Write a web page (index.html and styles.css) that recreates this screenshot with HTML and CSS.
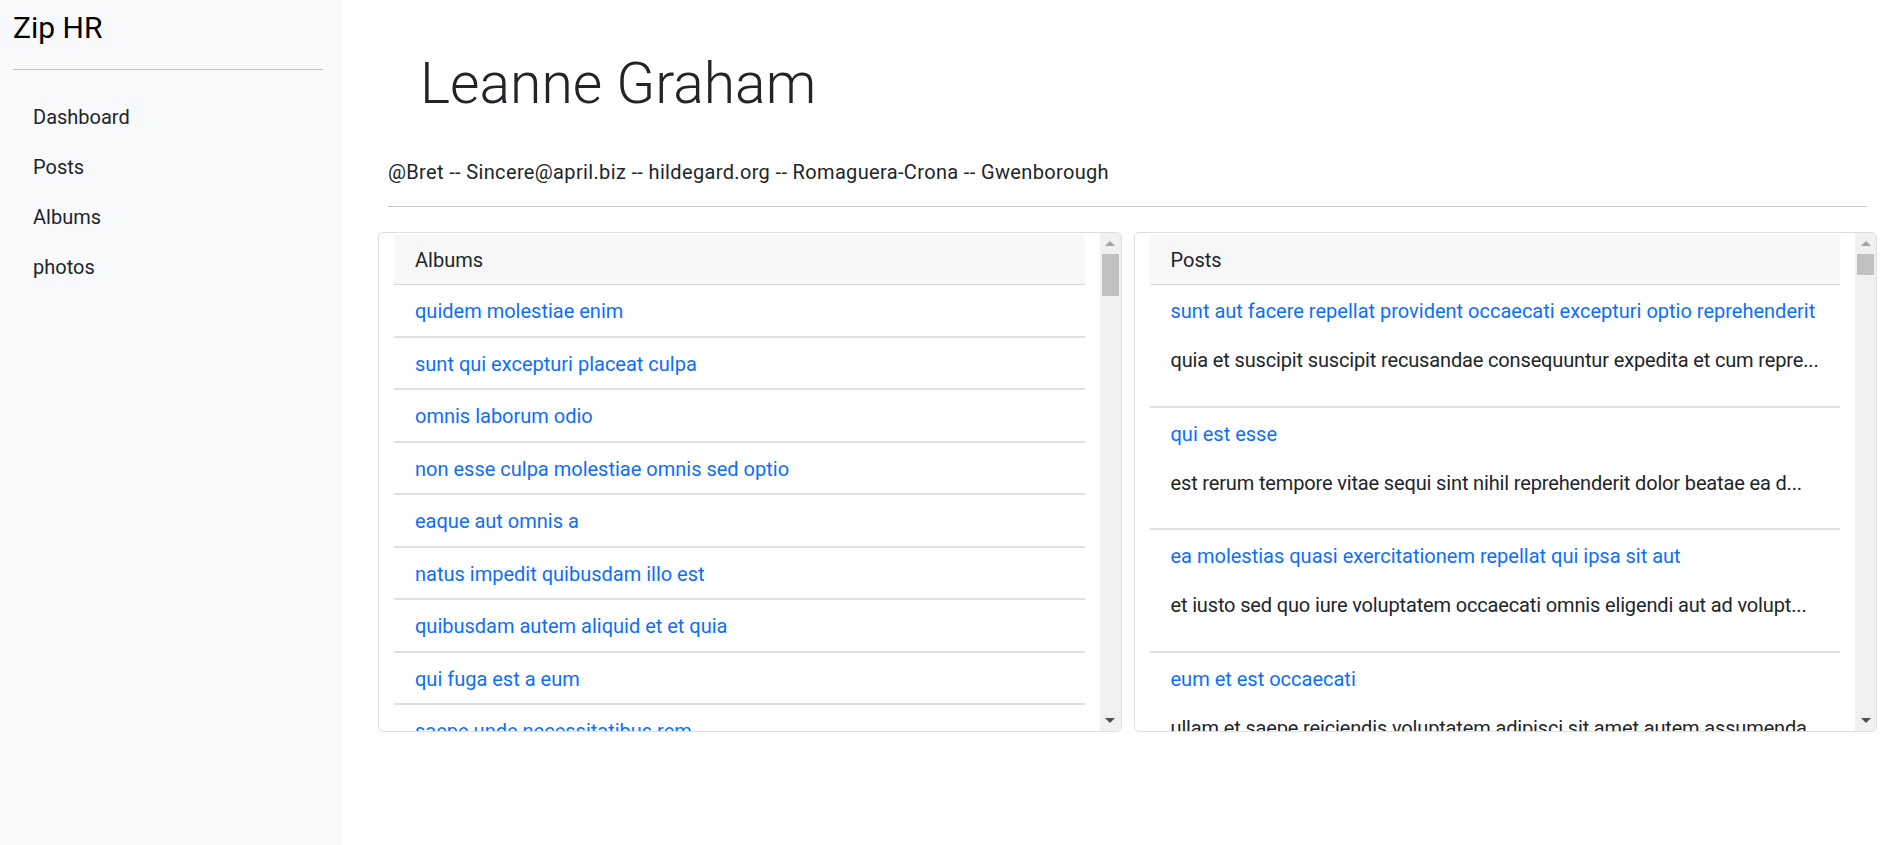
FILE: index.html
```html
<!DOCTYPE html>
<html lang="en">
<head>
<meta charset="utf-8">
<title>Zip HR</title>
<link rel="stylesheet" href="styles.css">
</head>
<body>
<aside class="sidebar">
  <h3 class="brand">Zip HR</h3>
  <hr class="rule">
  <nav class="nav">
    <a class="nav-link" href="#">Dashboard</a>
    <a class="nav-link" href="#">Posts</a>
    <a class="nav-link" href="#">Albums</a>
    <a class="nav-link" href="#">photos</a>
  </nav>
</aside>
<main class="main">
  <h1 class="name">Leanne Graham</h1>
  <p class="meta">@Bret -- Sincere@april.biz -- hildegard.org -- Romaguera-Crona -- Gwenborough</p>
  <hr class="rule">
  <div class="cards">
    <section class="card">
      <div class="card-scroll">
        <div class="panel">
          <div class="panel-header">Albums</div>
          <ul class="list">
            <li class="album"><a href="#">quidem molestiae enim</a></li>
            <li class="album"><a href="#">sunt qui excepturi placeat culpa</a></li>
            <li class="album"><a href="#">omnis laborum odio</a></li>
            <li class="album"><a href="#">non esse culpa molestiae omnis sed optio</a></li>
            <li class="album"><a href="#">eaque aut omnis a</a></li>
            <li class="album"><a href="#">natus impedit quibusdam illo est</a></li>
            <li class="album"><a href="#">quibusdam autem aliquid et et quia</a></li>
            <li class="album"><a href="#">qui fuga est a eum</a></li>
            <li class="album"><a href="#">saepe unde necessitatibus rem</a></li>
            <li class="album"><a href="#">distinctio laborum qui</a></li>
          </ul>
        </div>
      </div>
      <div class="scrollbar">
        <div class="sb-btn"><span class="arrow-up"></span></div>
        <div class="sb-track"><div class="sb-thumb thumb-albums"></div></div>
        <div class="sb-btn"><span class="arrow-down"></span></div>
      </div>
    </section>
    <section class="card">
      <div class="card-scroll">
        <div class="panel">
          <div class="panel-header">Posts</div>
          <ul class="list">
            <li class="post">
              <a class="post-title" href="#">sunt aut facere repellat provident occaecati excepturi optio reprehenderit</a>
              <p class="post-body">quia et suscipit suscipit recusandae consequuntur expedita et cum repre...</p>
            </li>
            <li class="post">
              <a class="post-title" href="#">qui est esse</a>
              <p class="post-body">est rerum tempore vitae sequi sint nihil reprehenderit dolor beatae ea d...</p>
            </li>
            <li class="post">
              <a class="post-title" href="#">ea molestias quasi exercitationem repellat qui ipsa sit aut</a>
              <p class="post-body">et iusto sed quo iure voluptatem occaecati omnis eligendi aut ad volupt...</p>
            </li>
            <li class="post">
              <a class="post-title" href="#">eum et est occaecati</a>
              <p class="post-body">ullam et saepe reiciendis voluptatem adipisci sit amet autem assumenda...</p>
            </li>
            <li class="post">
              <a class="post-title" href="#">nesciunt quas odio</a>
              <p class="post-body">repudiandae veniam quaerat sunt sed alias aut fugiat sit autem sed est...</p>
            </li>
          </ul>
        </div>
      </div>
      <div class="scrollbar">
        <div class="sb-btn"><span class="arrow-up"></span></div>
        <div class="sb-track"><div class="sb-thumb thumb-posts"></div></div>
        <div class="sb-btn"><span class="arrow-down"></span></div>
      </div>
    </section>
  </div>
</main>
</body>
</html>
```

FILE: styles.css
```css
* { box-sizing: border-box; }

html, body {
  margin: 0;
  height: 100%;
}

body {
  display: flex;
  font-family: Roboto, "Liberation Sans", sans-serif;
  font-size: 20px;
  line-height: 30px;
  color: #212529;
  background: #ffffff;
  overflow: hidden;
}

.sidebar {
  width: 342px;
  flex: 0 0 342px;
  min-height: 100vh;
  background: #f8f9fa;
  padding: 0 19px 0 13px;
}

.brand {
  margin: 7px 0 0;
  font-size: 30px;
  line-height: 42px;
  font-weight: 400;
  color: #000;
}

.rule {
  border: 0;
  height: 1px;
  background: rgba(33, 37, 41, 0.25);
  margin: 0;
}

.sidebar .rule {
  margin: 20px 0 22px;
}

.nav {
  display: flex;
  flex-direction: column;
}

.nav-link {
  display: block;
  padding: 10px 20px;
  color: #212529;
  text-decoration: none;
}

.main {
  flex: 1;
  min-width: 0;
  padding: 0 37px 0 46px;
}

.name {
  margin: 48px 0 0;
  padding-left: 32px;
  font-size: 57px;
  line-height: 72px;
  font-weight: 300;
  color: #212529;
}

.meta {
  margin: 37px 0 0;
  letter-spacing: 0.35px;
}

.main .rule {
  margin: 19px 0 25px;
}

.cards {
  display: grid;
  grid-template-columns: 1fr 1fr;
  gap: 12px;
  margin: 0 -10px;
}

.card {
  display: flex;
  height: 500px;
  border: 1px solid #dfdfdf;
  border-radius: 5px;
  overflow: hidden;
  background: #fff;
}

.card-scroll {
  flex: 1;
  min-width: 0;
  overflow: hidden;
  padding: 1px 15px 0;
}

.panel-header {
  background: #f7f7f7;
  padding: 11px 21px 9px;
  border-bottom: 1px solid #d9d9d9;
  border-radius: 4px 4px 0 0;
}

.list {
  list-style: none;
  margin: 0;
  padding: 0;
}

.list a {
  color: #0d6efd;
  text-decoration: none;
}

.album {
  padding: 11px 21px 9.5px;
  border-bottom: 2px solid #e0e0e0;
}

.post {
  padding: 11px 21px 10.5px;
  border-bottom: 2px solid #e0e0e0;
}

.post-title {
  display: block;
  margin-bottom: 19px;
  white-space: nowrap;
  overflow: hidden;
  text-overflow: ellipsis;
}

.post-body {
  margin: 0 0 20px;
  white-space: nowrap;
  overflow: hidden;
  letter-spacing: -0.15px;
}

.scrollbar {
  flex: 0 0 21px;
  width: 21px;
  display: flex;
  flex-direction: column;
  background: #f1f1f1;
}

.sb-btn {
  height: 21px;
  flex: 0 0 21px;
  display: flex;
  align-items: center;
  justify-content: center;
}

.arrow-up {
  width: 0;
  height: 0;
  border-left: 5px solid transparent;
  border-right: 5px solid transparent;
  border-bottom: 5px solid #a3a3a3;
}

.arrow-down {
  width: 0;
  height: 0;
  border-left: 5px solid transparent;
  border-right: 5px solid transparent;
  border-top: 5px solid #505050;
}

.sb-track {
  flex: 1;
  padding: 0 2px;
}

.sb-thumb {
  background: #c1c1c1;
}

.thumb-albums { height: 42px; }
.thumb-posts { height: 21px; }
```
